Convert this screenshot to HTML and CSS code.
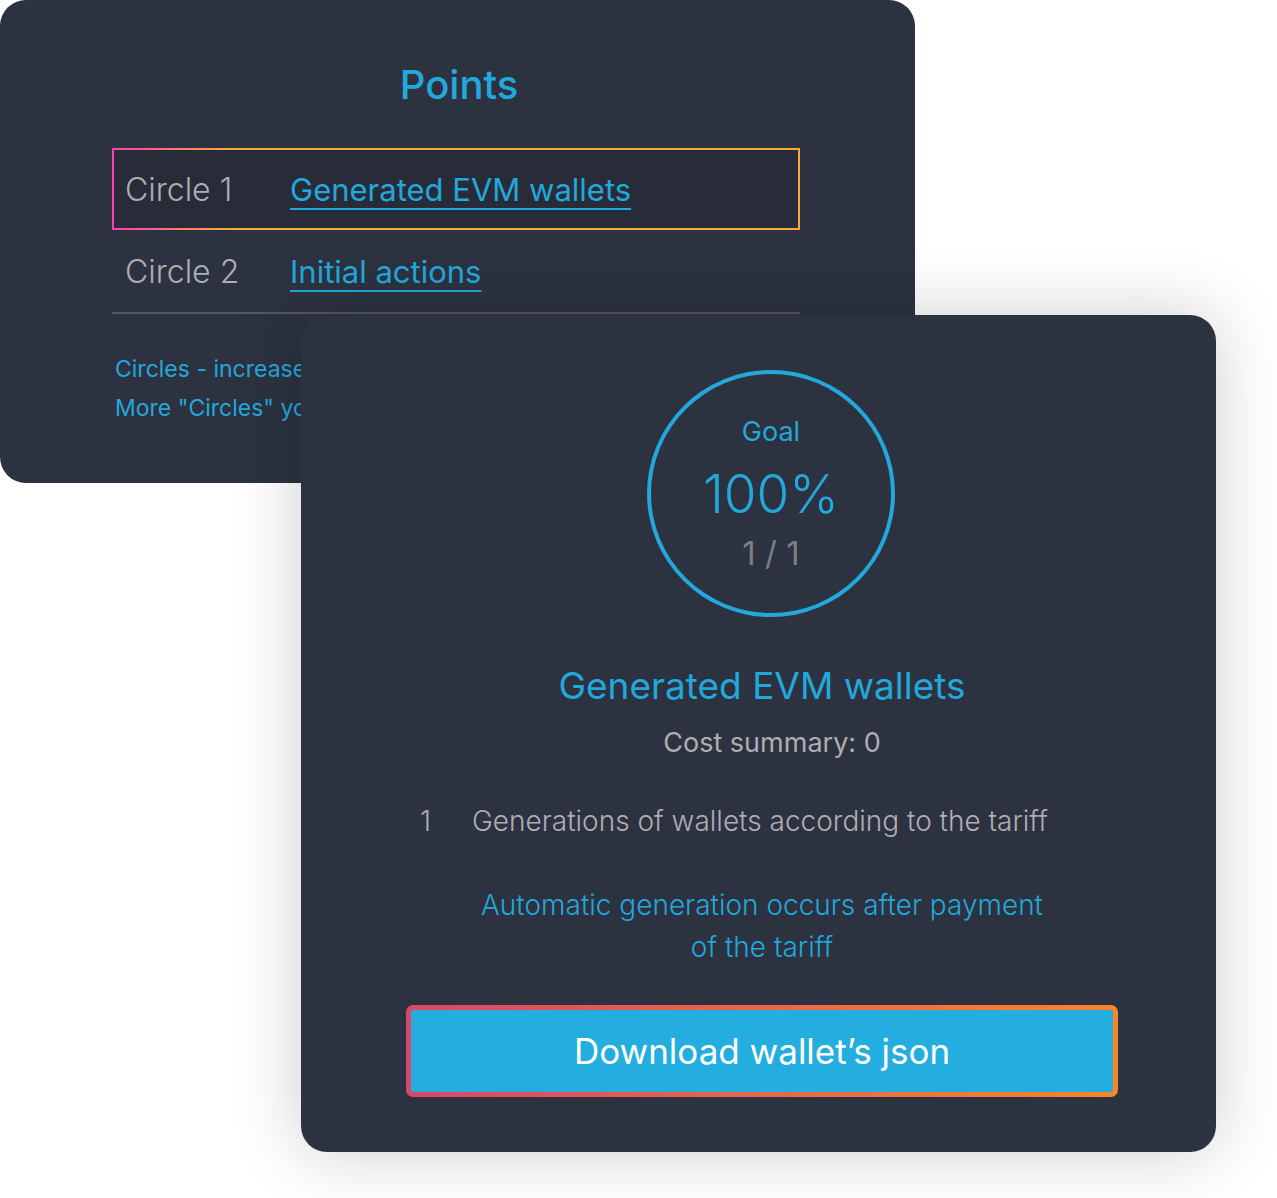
FILE: index.html
```html
<!DOCTYPE html>
<html lang="en">
  <head>
    <meta charset="UTF-8" />
    <meta name="viewport" content="width=device-width, initial-scale=1.0" />
    <title>Points</title>
    <link rel="stylesheet" href="styles.css">
  </head>
  <body>
    <div class="scene">
      <!-- Back card: list of circles -->
      <section class="card points-card">
        <h1 class="points-title">Points</h1>
        <ul class="circle-list">
          <li class="circle-row active">
            <span class="circle-name">Circle 1</span>
            <a href="#" class="circle-link">Generated EVM wallets</a>
          </li>
          <li class="circle-row">
            <span class="circle-name">Circle 2</span>
            <a href="#" class="circle-link">Initial actions</a>
          </li>
        </ul>
        <p class="points-note">
          <span>Circles - increase your points step by step</span>
          <span>More "Circles" you complete, more points you get</span>
        </p>
      </section>

      <!-- Front card: goal of the selected circle -->
      <section class="card goal-card">
        <div class="goal-ring">
          <span class="goal-label">Goal</span>
          <span class="goal-percent">100%</span>
          <span class="goal-count">1 / 1</span>
        </div>

        <h2 class="goal-title">Generated EVM wallets</h2>
        <p class="goal-cost">Cost summary: 0</p>

        <div class="goal-task">
          <span class="task-num">1</span>
          <span class="task-text">Generations of wallets according to the tariff</span>
        </div>

        <p class="goal-hint">Automatic generation occurs after payment<br>of the tariff</p>

        <button class="download-btn">Download wallet’s json</button>
      </section>
    </div>
  </body>
</html>
```

FILE: styles.css
```css
*,
*::before,
*::after {
  margin: 0;
  padding: 0;
  box-sizing: border-box;
}

:root {
  --card-bg: #2d3240;
  --row-bg: #282c38;
  --blue: #22a8dc;
  --button-blue: #23aedf;
  --gray: #adaeb3;
  --dark-gray: #7b7e85;
  --pink: #ff3cb8;
  --orange: #fca63c;
}

body {
  background-color: #ffffff;
  font-family: "Inter", "Noto Sans", sans-serif;
  color: var(--gray);
}

.scene {
  position: relative;
  width: 1277px;
  height: 1198px;
}

.card {
  background-color: var(--card-bg);
  border-radius: 26px;
}

/* Back card */
.points-card {
  width: 915px;
  height: 483px;
  padding: 61px 0 0 112px;
  overflow: hidden;
}

.points-title {
  width: 694px;
  text-align: center;
  font-size: 40px;
  line-height: 48px;
  font-weight: 500;
  color: var(--blue);
}

.circle-list {
  list-style: none;
  width: 688px;
  margin-top: 39px;
  border-bottom: 2px solid #54585f;
}

.circle-row {
  display: flex;
  align-items: center;
  height: 82px;
  padding-left: 11px;
  font-size: 31px;
  border: 2px solid transparent;
}

.circle-row.active {
  background:
    linear-gradient(var(--row-bg), var(--row-bg)) padding-box,
    linear-gradient(90deg, var(--pink), var(--orange) 17%) border-box;
}

.circle-name {
  width: 165px;
  color: var(--gray);
  font-weight: 300;
  font-size: 32px;
}

.circle-link {
  color: var(--blue);
  text-decoration: underline;
  text-decoration-thickness: 2px;
  text-underline-offset: 7px;
}

.points-note {
  display: flex;
  flex-direction: column;
  margin-top: 36px;
  padding-left: 3px;
  font-size: 23px;
  line-height: 39px;
  color: var(--blue);
  white-space: nowrap;
}

/* Front card */
.goal-card {
  position: absolute;
  left: 301px;
  top: 315px;
  width: 915px;
  height: 837px;
  padding: 55px 98px 55px 105px;
  display: flex;
  flex-direction: column;
  align-items: center;
  box-shadow: 0 0 70px rgba(0, 0, 0, 0.2);
}

.goal-ring {
  width: 248px;
  height: 248px;
  margin-left: 18px;
  border: 4px solid var(--blue);
  border-radius: 50%;
  display: flex;
  flex-direction: column;
  align-items: center;
  justify-content: center;
}

.goal-label {
  font-size: 27px;
  line-height: 32px;
  color: var(--blue);
}

.goal-percent {
  margin-top: 14px;
  font-size: 53px;
  line-height: 64px;
  font-weight: 300;
  color: var(--blue);
}

.goal-count {
  margin-top: 8px;
  font-size: 33px;
  line-height: 38px;
  color: var(--dark-gray);
}

.goal-title {
  margin-top: 47px;
  font-size: 37px;
  line-height: 44px;
  font-weight: 400;
  color: var(--blue);
}

.goal-cost {
  margin-top: 19px;
  margin-left: 20px;
  font-size: 27px;
  line-height: 32px;
  color: var(--gray);
}

.goal-task {
  align-self: stretch;
  display: flex;
  margin-top: 45px;
  padding-left: 14px;
  font-size: 28px;
  line-height: 34px;
  font-weight: 300;
  color: var(--gray);
}

.task-num {
  width: 52px;
}

.goal-hint {
  margin-top: 46px;
  font-size: 28px;
  line-height: 42px;
  font-weight: 300;
  text-align: center;
  color: var(--blue);
}

.download-btn {
  align-self: stretch;
  height: 92px;
  margin-top: 37px;
  border: 5px solid transparent;
  border-radius: 7px;
  background:
    linear-gradient(var(--button-blue), var(--button-blue)) padding-box,
    linear-gradient(90deg, #d9476a, #f8852a) border-box;
  font-family: inherit;
  font-size: 35px;
  color: #ffffff;
  cursor: pointer;
}
```
